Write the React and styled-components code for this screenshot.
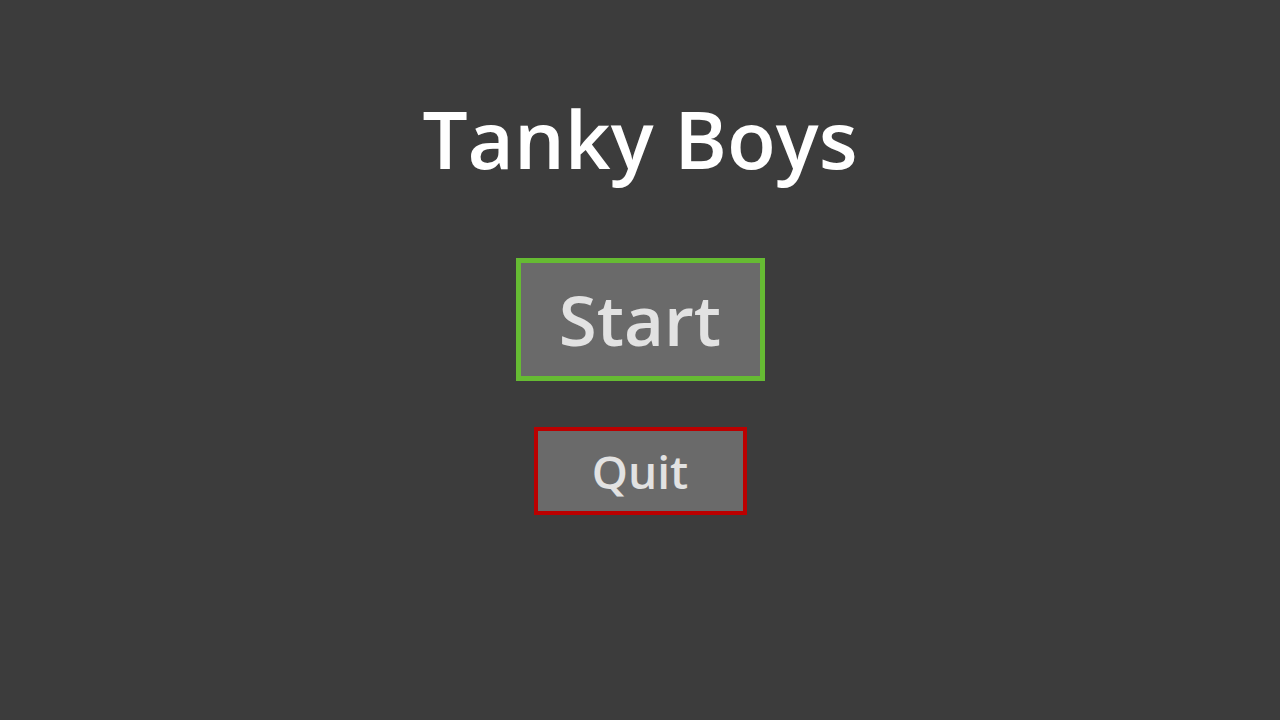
import React from 'react';
import styled, { createGlobalStyle } from 'styled-components';

const GlobalStyle = createGlobalStyle`
  html, body {
    margin: 0;
    padding: 0;
    background: #3c3c3c;
  }
  body {
    font-family: "Open Sans", "Noto Sans", sans-serif;
  }
`;

const Screen = styled.div`
  width: 1280px;
  height: 720px;
  background: #3c3c3c;
  display: flex;
  flex-direction: column;
  align-items: center;
`;

const Title = styled.h1`
  margin: 85px 0 0;
  font-size: 80px;
  font-weight: 600;
  line-height: 105px;
  color: #ffffff;
`;

const MenuButton = styled.button`
  font-family: "Open Sans", "Noto Sans", sans-serif;
  font-weight: 600;
  font-size: ${p => p.size}px;
  color: #e2e2e2;
  background: #6a6a6a;
  border: ${p => p.borderWidth}px solid ${p => p.accent};
  width: ${p => p.w}px;
  height: ${p => p.h}px;
  margin-top: ${p => p.top}px;
  padding: 0;
  line-height: 1;
  display: flex;
  align-items: center;
  justify-content: center;
  box-sizing: border-box;
  cursor: pointer;
`;

export default function App() {
  return (
    <>
      <GlobalStyle />
      <Screen>
        <Title>Tanky Boys</Title>
        <MenuButton accent="#66bb33" borderWidth={5} size={69} w={249} h={123} top={68}>
          Start
        </MenuButton>
        <MenuButton accent="#bb0000" borderWidth={4} size={46} w={213} h={88} top={46}>
          Quit
        </MenuButton>
      </Screen>
    </>
  );
}
